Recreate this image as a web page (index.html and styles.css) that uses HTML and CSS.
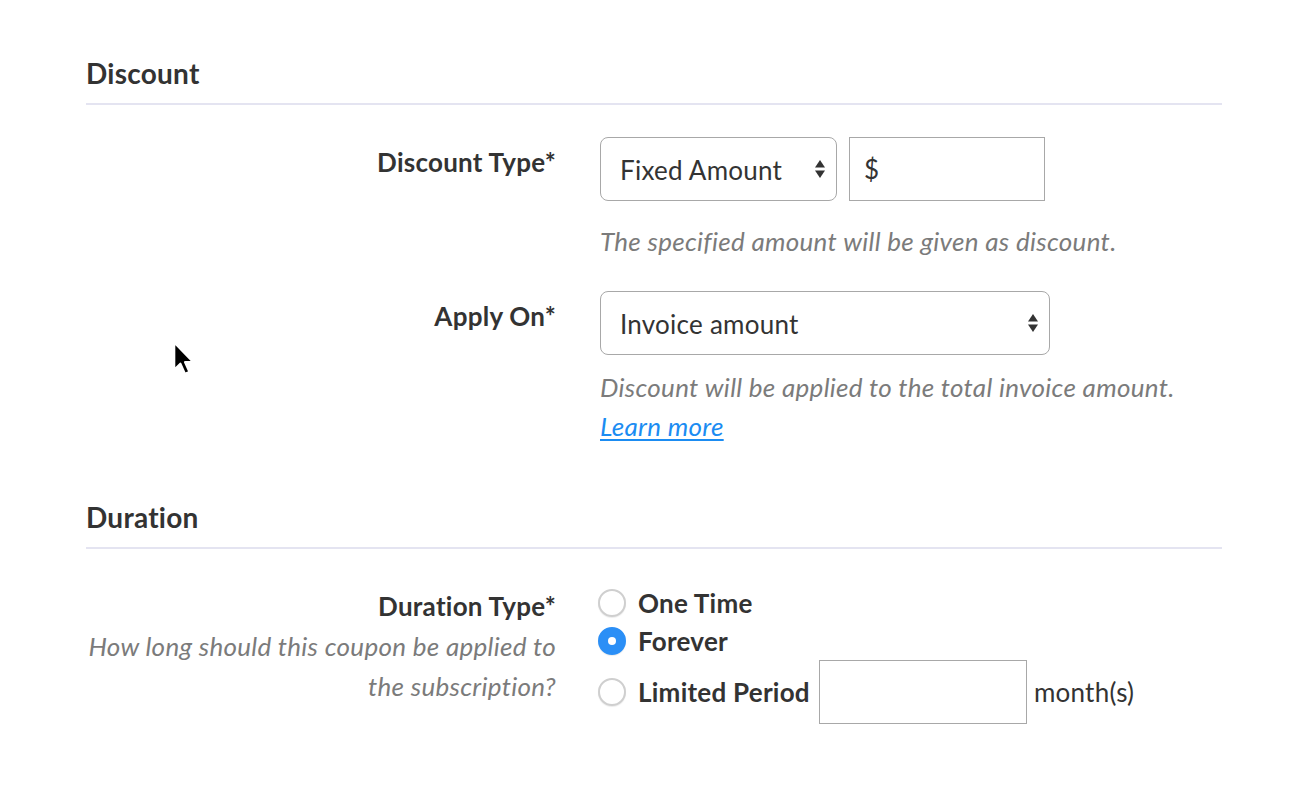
FILE: index.html
```html
<!DOCTYPE html>
<html lang="en">
<head>
<meta charset="utf-8">
<title>Coupon</title>
<link rel="stylesheet" href="styles.css">
</head>
<body>
<div class="page">
  <section class="section">
    <h2 class="section-title">Discount</h2>
    <div class="form-row first">
      <div class="label">Discount Type*</div>
      <div class="control">
        <div class="inline">
          <div class="select select-type">
            <span>Fixed Amount</span>
            <svg class="arrows" width="12" height="22" viewBox="0 0 12 22"><polygon points="6,2 11,9.5 1,9.5" fill="#333"/><polygon points="1,12.5 11,12.5 6,20" fill="#333"/></svg>
          </div>
          <div class="input input-amount">$</div>
        </div>
        <p class="hint hint-first">The specified amount will be given as discount.</p>
      </div>
    </div>
    <div class="form-row second">
      <div class="label">Apply On*</div>
      <div class="control">
        <div class="select select-apply">
          <span>Invoice amount</span>
          <svg class="arrows" width="12" height="22" viewBox="0 0 12 22"><polygon points="6,2 11,9.5 1,9.5" fill="#333"/><polygon points="1,12.5 11,12.5 6,20" fill="#333"/></svg>
        </div>
        <p class="hint hint-second">Discount will be applied to the total invoice amount.<br><a class="link" href="#">Learn more</a></p>
      </div>
    </div>
  </section>

  <section class="section duration">
    <h2 class="section-title">Duration</h2>
    <div class="form-row first-dur">
      <div class="label label-dur">Duration Type*
        <div class="label-hint">How long should this coupon be applied to<br>the subscription?</div>
      </div>
      <div class="control">
        <div class="radios">
          <div class="radio-row"><span class="radio"></span><span class="radio-text">One Time</span></div>
          <div class="radio-row"><span class="radio checked"></span><span class="radio-text">Forever</span></div>
          <div class="radio-row tall"><span class="radio"></span><span class="radio-text">Limited Period</span><div class="input input-months"></div><span class="unit">month(s)</span></div>
        </div>
      </div>
    </div>
  </section>

  <svg class="cursor" width="26" height="38" viewBox="0 0 22 32"><path d="M2,1.5 L2,24 L7.2,19 L11,27.5 L14.6,26 L10.9,17.7 L17.8,17.7 Z" fill="#000" stroke="#fff" stroke-width="1.6" stroke-linejoin="round"/></svg>
</div>
</body>
</html>
```

FILE: styles.css
```css
* { box-sizing: border-box; }
html, body { margin: 0; padding: 0; background: #fff; }
body {
  font-family: Lato, "Open Sans", "Liberation Sans", sans-serif;
  color: #333;
  font-size: 26px;
  letter-spacing: 0.25px;
}
.page {
  position: relative;
  width: 1296px;
  height: 798px;
  padding: 57px 74px 0 86px;
}
.section-title {
  margin: 0;
  font-size: 28px;
  line-height: 32px;
  font-weight: 700;
  color: #333;
  padding-bottom: 14px;
  border-bottom: 2px solid #e4e4f1;
}
.duration { margin-top: 55px; }
.form-row {
  display: grid;
  grid-template-columns: 470px 1fr;
  column-gap: 44px;
}
.form-row.first { margin-top: 32px; }
.form-row.second { margin-top: 30px; }
.form-row.first-dur { margin-top: 35px; }
.label {
  text-align: right;
  font-weight: 700;
  line-height: 40px;
  padding-top: 5px;
}
.label-dur { padding-top: 2px; }
.label-hint {
  font-weight: 400;
  font-style: italic;
  color: #7b7b7b;
  letter-spacing: 0.3px;
}
.inline {
  display: flex;
  gap: 12px;
}
.select {
  display: flex;
  align-items: center;
  justify-content: space-between;
  height: 64px;
  border: 1.5px solid #a8a8a8;
  border-radius: 8px;
  padding: 0 10px 0 19px;
  background: #fff;
}
.select span { padding-top: 2px; }
.select-type { width: 237px; }
.select-apply { width: 450px; }
.arrows { display: block; }
.input {
  height: 64px;
  border: 1.5px solid #a8a8a8;
  padding: 0 14px;
  display: flex;
  align-items: center;
  background: #fff;
}
.input-amount { width: 196px; }
.input-months { width: 208px; margin: 0 7px 0 9px; }
.hint {
  margin: 0;
  font-style: italic;
  color: #7b7b7b;
  line-height: 39px;
  letter-spacing: 0.3px;
}
.hint-first { margin-top: 21px; }
.hint-second { margin-top: 13px; }
.link {
  color: #1b8cf2;
  text-decoration: underline;
  text-decoration-thickness: 2px;
  text-underline-offset: 3px;
}
.radios {
  display: flex;
  flex-direction: column;
}
.radio-row {
  display: flex;
  align-items: center;
  height: 38px;
  margin-left: -2px;
}
.radio-row.tall { height: 64px; }
.radio {
  width: 28px;
  height: 28px;
  border-radius: 50%;
  border: 2px solid #cfcfcf;
  background: #fff;
  box-shadow: 0 1px 1px rgba(0,0,0,0.08);
  display: flex;
  align-items: center;
  justify-content: center;
  margin-right: 12px;
}
.radio.checked {
  background: #2b8ff6;
  border-color: #2b8ff6;
}
.radio.checked::after {
  content: "";
  width: 8px;
  height: 8px;
  border-radius: 50%;
  background: #fff;
}
.radio-text { font-weight: 700; }
.unit { font-weight: 400; }
.cursor {
  position: absolute;
  left: 172px;
  top: 341px;
}
```
